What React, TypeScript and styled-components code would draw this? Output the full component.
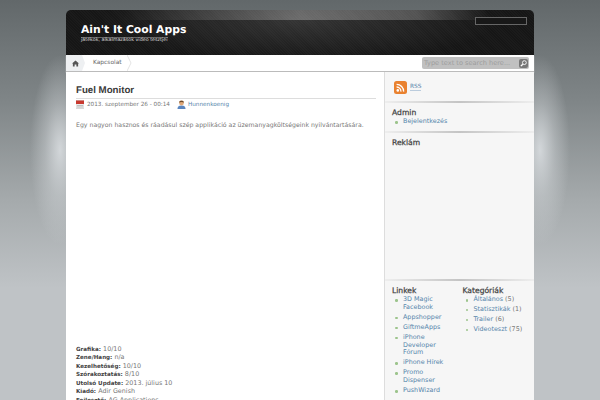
import React from 'react';
import styled, { createGlobalStyle } from 'styled-components';

const Global = createGlobalStyle`
  html, body {
    margin: 0;
    height: 400px;
    overflow: hidden;
    font-family: "DejaVu Sans", sans-serif;
    background: #bfc3c6;
    text-rendering: geometricPrecision;
  }
  ul { list-style: none; margin: 0; padding: 0; }
  a { color: #5585ab; text-decoration: none; }
`;

const Page = styled.div`
  width: 600px;
  height: 400px;
  overflow: hidden;
  padding: 10px 66px 0;
  box-sizing: border-box;
  opacity: 0.999;
  background:
    radial-gradient(ellipse 30px 95px at 60px 150px, rgba(214, 218, 221, 0.95) 0%, rgba(214, 218, 221, 0.4) 50%, rgba(214, 218, 221, 0) 100%),
    radial-gradient(ellipse 30px 95px at 540px 150px, rgba(214, 218, 221, 0.95) 0%, rgba(214, 218, 221, 0.4) 50%, rgba(214, 218, 221, 0) 100%),
    linear-gradient(to bottom, #62686a 0%, #7f8587 25%, #a5aaac 50%, #bfc3c6 72%, #bfc3c6 100%);
`;

const Header = styled.header`
  height: 45px;
  box-sizing: border-box;
  border-radius: 5px 5px 0 0;
  padding: 7px 7px 0 15px;
  display: flex;
  justify-content: space-between;
  align-items: flex-start;
  background:
    linear-gradient(to right, rgba(255, 255, 255, 0) 12%, rgba(255, 255, 255, 0.28) 50%, rgba(255, 255, 255, 0.22) 75%, rgba(255, 255, 255, 0) 90%) top / 100% 10px no-repeat,
    radial-gradient(ellipse 200px 42px at 50% 22%, rgba(255, 255, 255, 0.13), rgba(255, 255, 255, 0)),
    repeating-linear-gradient(45deg, #161616 0 1px, #1b1b1b 1px 2px);
`;

const Brand = styled.div`
  display: flex;
  flex-direction: column;
  margin-top: 5px;
`;

const SiteTitle = styled.div`
  color: #fff;
  font-size: 10.8px;
  font-weight: bold;
  line-height: 15px;
`;

const Tagline = styled.div`
  color: #ddd;
  font-size: 4.8px;
  line-height: 6px;
  border-top: 1px solid #666;
  align-self: flex-start;
`;

const TopBox = styled.div`
  width: 50px;
  height: 6px;
  border: 1px solid #666;
  background: #181818;
`;

const Nav = styled.nav`
  height: 16px;
  display: flex;
  align-items: center;
  background: #fff;
  border-bottom: 1px solid #bbb;
  box-shadow: 0 1px 1px #ddd;
`;

const HomeTab = styled.div`
  width: 19px;
  height: 16px;
  background: #eef0f2;
  display: flex;
  align-items: center;
  justify-content: center;
  clip-path: polygon(0 0, 16px 0, 19px 50%, 16px 100%, 0 100%);
`;

const NavItem = styled.div`
  font-size: 5.9px;
  color: #666;
  margin-left: 8px;
  line-height: 16px;
`;

const Chevron = styled.svg`
  width: 5px;
  height: 16px;
  margin-left: 5px;
  flex-shrink: 0;
`;

const Search = styled.div`
  margin-left: auto;
  margin-right: 5px;
  width: 107px;
  height: 12px;
  box-sizing: border-box;
  border-radius: 2px;
  background: #c0c0c0;
  display: flex;
  align-items: center;
  justify-content: space-between;
  padding: 0 1px 0 2px;
  color: #9d9d9d;
  font-size: 6.6px;
  white-space: nowrap;
`;

const SearchButton = styled.div`
  width: 9px;
  height: 9px;
  border-radius: 2px;
  background: #777;
  display: flex;
  align-items: center;
  justify-content: center;
`;

const Body = styled.div`
  display: grid;
  grid-template-columns: 318px 150px;
  height: 330px;
  background: #fff;
`;

const Main = styled.main`
  padding: 12px 8px 0 10px;
  display: flex;
  flex-direction: column;
  color: #777;
  overflow: hidden;
`;

const PostTitle = styled.h1`
  margin: 0;
  font-family: "Liberation Sans", sans-serif;
  font-size: 9.7px;
  line-height: 13px;
  color: #3a3a3a;
  font-weight: bold;
  padding-bottom: 1px;
  border-bottom: 1px solid #ddd;
`;

const Meta = styled.div`
  display: flex;
  align-items: center;
  height: 11px;
  font-size: 5.7px;
  color: #777;
`;

const MetaGap = styled.span`
  width: 7px;
`;

const IconSlot = styled.span`
  display: inline-flex;
  width: 11px;
`;

const Lead = styled.p`
  margin: 10px 0 0;
  font-size: 6.2px;
  line-height: 11px;
  white-space: nowrap;
`;

const Specs = styled.div`
  margin-top: auto;
  font-size: 6.4px;
  line-height: 8.5px;
  white-space: nowrap;
  margin-bottom: -2px;

  b { color: #444; font-size: 5.6px; line-height: 0; }
`;

const Side = styled.aside`
  background: #f6f6f6;
  border-left: 1px solid #ddd;
  display: flex;
  flex-direction: column;
`;

const Block = styled.section<{ $height: number }>`
  height: ${p => p.$height}px;
  box-sizing: border-box;
  padding: 0 7px;
  position: relative;
  flex-shrink: 0;
  &::after {
    content: '';
    position: absolute;
    left: 0;
    right: 0;
    bottom: 0;
    height: 2px;
    background: linear-gradient(to right, #eee, #c4c4c4 50%, #eee);
  }
`;

const RssRow = styled.div`
  display: flex;
  align-items: center;
  gap: 3px;
  padding: 9px 2px 0;
  font-size: 5.8px;

  a { border-bottom: 1px solid #bcd; }
`;

const WidgetTitle = styled.h3`
  margin: 0;
  padding-top: 4px;
  font-size: 7.6px;
  line-height: 11px;
  color: #444;
  font-weight: normal;
  -webkit-text-stroke: 0.25px #444;
`;

const LinkList = styled.ul<{ $narrow?: boolean }>`
  padding-right: ${p => (p.$narrow ? 12 : 0)}px;
`;

const LinkItem = styled.li`
  position: relative;
  padding-left: 11px;
  font-size: 6.4px;
  line-height: 7.9px;
  margin-bottom: 2px;
  color: #777;
  &::before {
    content: '';
    position: absolute;
    left: 3px;
    top: 3px;
    width: 2.5px;
    height: 2.5px;
    border-radius: 50%;
    background: #9cc48c;
  }
`;

const Columns = styled.div`
  display: grid;
  grid-template-columns: 70.5px 1fr;
  padding: 0 7px;
`;

const links = [
  '3D Magic Facebook',
  'Appshopper',
  'GiftmeApps',
  'iPhone Developer Fórum',
  'iPhone Hírek',
  'Promo Dispenser',
  'PushWizard',
];

const cats: [string, number][] = [
  ['Általános', 5],
  ['Statisztikák', 1],
  ['Trailer', 6],
  ['Videoteszt', 75],
];

const specs: [string, string][] = [
  ['Grafika:', '10/10'],
  ['Zene/Hang:', 'n/a'],
  ['Kezelhetőség:', '10/10'],
  ['Szórakoztatás:', '8/10'],
  ['Utolsó Update:', '2013. július 10'],
  ['Kiadó:', 'Adir Genish'],
  ['Fejlesztő:', 'AG Applications'],
];

const HomeIcon = () => (
  <svg width="7" height="7" viewBox="0 0 8 8">
    <path d="M4 0.5 L8 4 H7 V7.5 H5 V5 H3 V7.5 H1 V4 H0 Z" fill="#555" />
  </svg>
);

const LensIcon = () => (
  <svg width="7" height="7" viewBox="0 0 8 8" fill="none" stroke="#fff">
    <circle cx="5" cy="3" r="2.2" />
    <path d="M3.2 4.8 L1 7" strokeWidth="1.6" />
  </svg>
);

const CalendarIcon = () => (
  <svg width="8" height="9" viewBox="0 0 8 9">
    <rect x="0" y="0.5" width="8" height="8" fill="#eee" stroke="#bbb" strokeWidth="0.5" />
    <rect x="0" y="0.5" width="8" height="3.5" fill="#c8392f" />
    <path d="M1 5.5 H7 M1 7 H7" stroke="#aaa" strokeWidth="0.7" />
  </svg>
);

const UserIcon = () => (
  <svg width="9" height="9" viewBox="0 0 9 9">
    <path d="M0.5 9 C0.5 6 2.5 5.5 4.5 5.5 C6.5 5.5 8.5 6 8.5 9 Z" fill="#5b86c0" />
    <circle cx="4.5" cy="3" r="2.4" fill="#e0a878" />
    <path d="M2 2.6 C2 0 7 0 7 2.6 C5.5 1.8 3.5 1.8 2 2.6 Z" fill="#6b4a2c" />
  </svg>
);

const RssIcon = () => (
  <svg width="13" height="13" viewBox="0 0 13 13">
    <rect width="13" height="13" rx="2.5" fill="#e9812f" />
    <circle cx="3.8" cy="9.4" r="1.3" fill="#fff" />
    <path d="M2.6 6 A4.2 4.2 0 0 1 6.9 10.6 M2.6 3.4 A6.9 6.9 0 0 1 9.6 10.6" fill="none" stroke="#fff" strokeWidth="1.3" />
  </svg>
);

export default function App() {
  return (
    <Page>
      <Global />
      <Header>
        <Brand>
          <SiteTitle>Ain't It Cool Apps</SiteTitle>
          <Tagline>játékok, alkalmazások video tesztjei</Tagline>
        </Brand>
        <TopBox />
      </Header>
      <Nav>
        <HomeTab><HomeIcon /></HomeTab>
        <NavItem>Kapcsolat</NavItem>
        <Chevron viewBox="0 0 5 16"><path d="M0 0 L4 8 L0 16" fill="none" stroke="#e4e4e4" /></Chevron>
        <Search>
          Type text to search here...
          <SearchButton><LensIcon /></SearchButton>
        </Search>
      </Nav>
      <Body>
        <Main>
          <PostTitle>Fuel Monitor</PostTitle>
          <Meta>
            <IconSlot><CalendarIcon /></IconSlot>
            2013. szeptember 26 - 00:14
            <MetaGap />
            <IconSlot><UserIcon /></IconSlot>
            <a href="#">Hunnenkoenig</a>
          </Meta>
          <Lead>Egy nagyon hasznos és ráadásul szép applikáció az üzemanyagköltségeink nyilvántartására.</Lead>
          <Specs>
            {specs.map(([k, v]) => (
              <div key={k}><b>{k}</b> {v}</div>
            ))}
          </Specs>
        </Main>
        <Side>
          <Block $height={31}>
            <RssRow><RssIcon /><a href="#">RSS</a></RssRow>
          </Block>
          <Block $height={30}>
            <WidgetTitle>Admin</WidgetTitle>
            <ul><LinkItem><a href="#">Bejelentkezés</a></LinkItem></ul>
          </Block>
          <Block $height={148}>
            <WidgetTitle>Reklám</WidgetTitle>
          </Block>
          <Columns>
            <div>
              <WidgetTitle>Linkek</WidgetTitle>
              <LinkList $narrow>{links.map(l => <LinkItem key={l}><a href="#">{l}</a></LinkItem>)}</LinkList>
            </div>
            <div>
              <WidgetTitle>Kategóriák</WidgetTitle>
              <LinkList>{cats.map(([c, n]) => <LinkItem key={c}><a href="#">{c}</a> ({n})</LinkItem>)}</LinkList>
            </div>
          </Columns>
        </Side>
      </Body>
    </Page>
  );
}
